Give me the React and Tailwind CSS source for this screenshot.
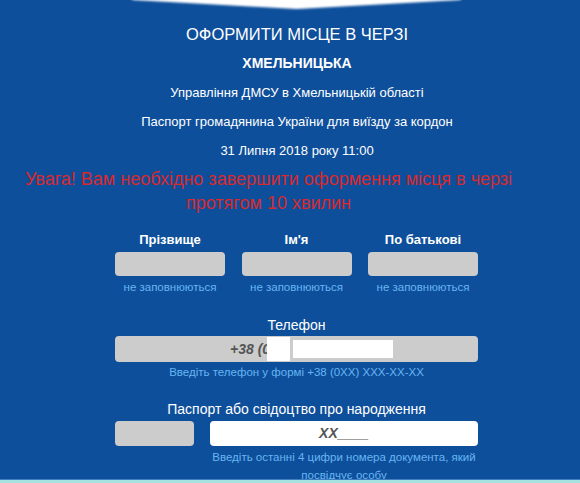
import React from 'react';

const font = { fontFamily: '"Liberation Sans", Arial, sans-serif' };

function NameField({ label }) {
  return (
    <div className="flex flex-col items-center w-[110px]">
      <div className="text-[13px] leading-[16px] font-bold text-white">{label}</div>
      <div className="mt-[4px] w-[110px] h-[24px] rounded-[4px] bg-[#cccccc]"></div>
      <div className="mt-[4px] text-[11.5px] leading-[14px] text-[#66b5f2] whitespace-nowrap">не заповнюються</div>
    </div>
  );
}

export default function App() {
  return (
    <div className="relative w-[580px] h-[483px] overflow-hidden bg-[#0e4f9b]" style={font}>
      {/* white notch at the top */}
      <svg className="absolute top-0 left-0" width="580" height="14" viewBox="0 0 580 14">
        <defs>
          <filter id="soft" x="-5%" y="-50%" width="110%" height="200%">
            <feGaussianBlur stdDeviation="0.9" />
          </filter>
        </defs>
        <polygon points="128,-4 464,-4 460,0 297,9 133,0" fill="#ffffff" filter="url(#soft)" />
      </svg>

      <div className="flex flex-col items-center pt-[20px] pl-[14px] text-white">
        <div className="text-[16.5px] leading-[29px] uppercase">Оформити місце в черзі</div>
        <div className="text-[14px] leading-[29px] font-bold">ХМЕЛЬНИЦЬКА</div>
        <div className="text-[13px] leading-[29px]">Управління ДМСУ в Хмельницькій області</div>
        <div className="text-[13px] leading-[29px]">Паспорт громадянина України для виїзду за кордон</div>
        <div className="text-[13px] leading-[29px]">31 Липня 2018 року 11:00</div>
      </div>

      <div className="mt-[2px] w-[537px] text-center text-[18px] leading-[24px] text-[#d8292d]">
        Увага! Вам необхідно завершити оформення місця в черзі
        <br />
        протягом 10 хвилин
      </div>

      <div className="ml-[115px] w-[363px]">
        <div className="mt-[17px] flex justify-between">
          <NameField label="Прізвище" />
          <NameField label="Ім'я" />
          <NameField label="По батькові" />
        </div>

        <div className="mt-[23px] flex flex-col items-center">
          <div className="text-[14px] leading-[16px] text-white">Телефон</div>
          <div className="relative mt-[3px] w-[363px] h-[26px] rounded-[4px] bg-[#cccccc] flex items-center">
            <span className="ml-[115px] text-[14px] font-bold italic text-[#555555]">+38 (0</span>
            <div className="absolute left-[152px] top-[1px] w-[23px] h-[24px] bg-white"></div>
            <div className="absolute left-[178px] top-[4px] w-[100px] h-[18px] bg-white"></div>
          </div>
          <div className="mt-[3px] text-[11.5px] leading-[14px] text-[#66b5f2]">Введіть телефон у формі +38 (0XX) XXX-XX-XX</div>
        </div>

        <div className="mt-[22px] flex flex-col items-center">
          <div className="text-[14px] leading-[16px] text-white">Паспорт або свідоцтво про народження</div>
          <div className="mt-[4px] w-[363px] flex justify-between items-start">
            <div className="w-[79px] h-[25px] rounded-[4px] bg-[#cccccc]"></div>
            <div className="w-[268px] flex flex-col items-center">
              <div className="w-[268px] h-[25px] rounded-[4px] bg-white flex items-center justify-center">
                <span className="text-[14px] font-bold italic text-[#555555]">XX____</span>
              </div>
              <div className="mt-[2px] w-[272px] text-center text-[11.5px] leading-[18px] text-[#66b5f2]">
                Введіть останні 4 цифри номера документа, який посвідчує особу
              </div>
            </div>
          </div>
        </div>
      </div>

      <div className="absolute left-0 bottom-0 w-full h-[1px] mb-[3px] bg-[#3f7cc0]"></div>
      <div className="absolute left-0 bottom-0 w-full h-[3px] bg-[#a6e2df]"></div>
    </div>
  );
}
